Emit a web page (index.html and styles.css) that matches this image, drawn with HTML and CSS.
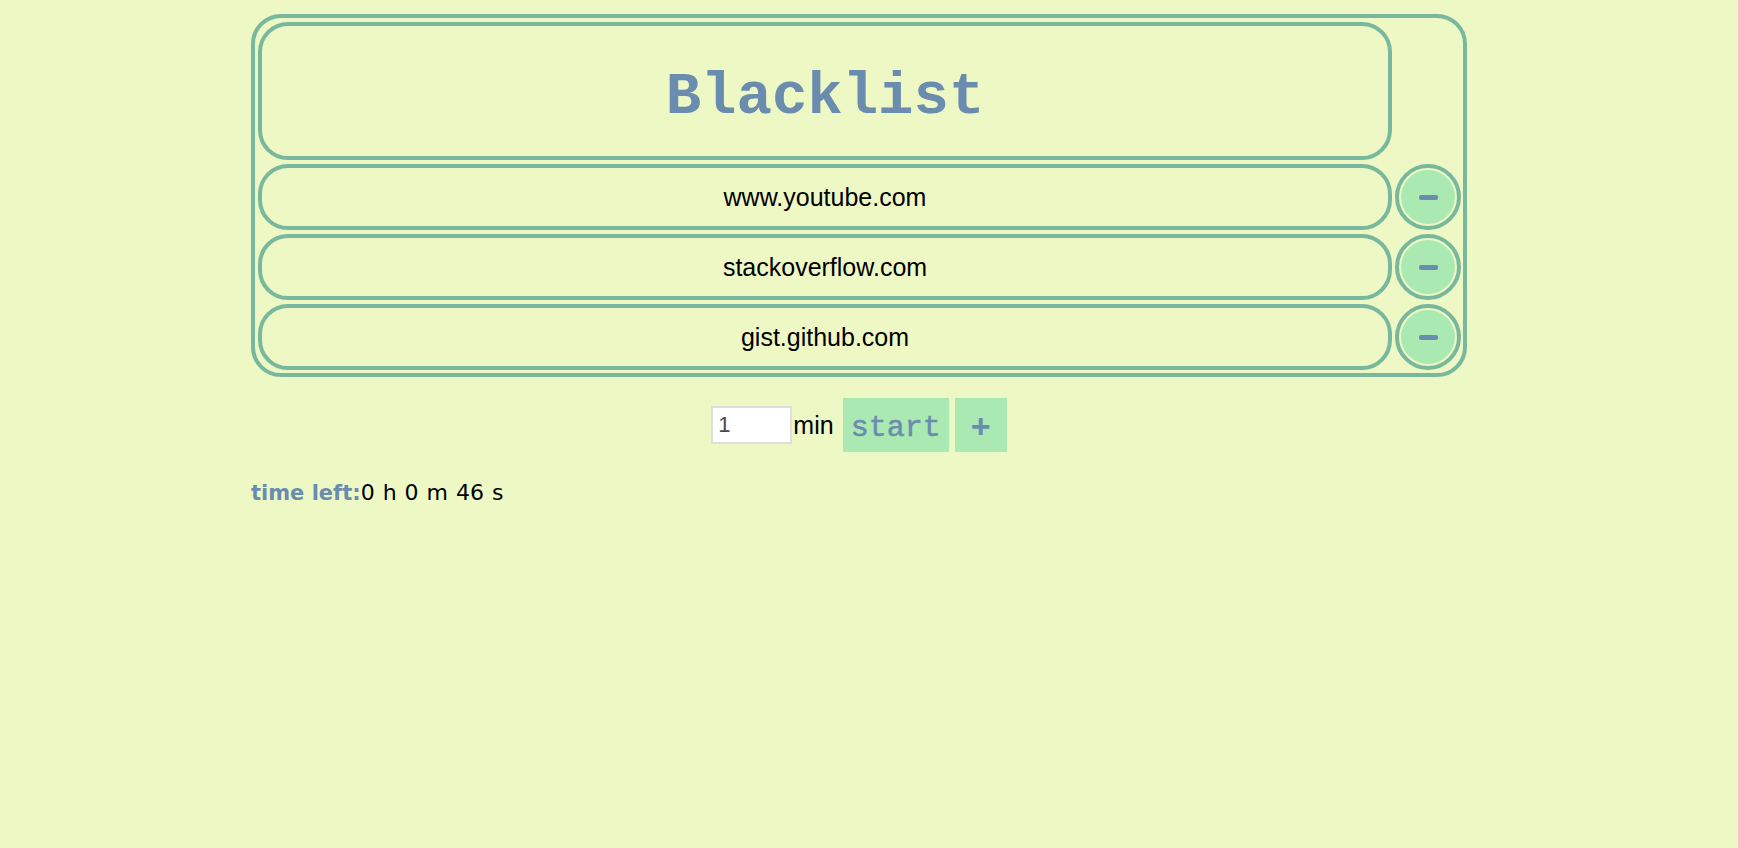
FILE: index.html
```html
<!DOCTYPE html>
<html lang="en">
<head>
<meta charset="utf-8">
<title>Blacklist</title>
<link rel="stylesheet" href="styles.css">
</head>
<body>
  <div class="panel">
    <div class="title-cell"><h1 class="title">Blacklist</h1></div>
    <div class="spacer"></div>

    <div class="site">www.youtube.com</div>
    <div class="remove"><button class="remove-btn" type="button" aria-label="remove"><span class="minus"></span></button></div>

    <div class="site">stackoverflow.com</div>
    <div class="remove"><button class="remove-btn" type="button" aria-label="remove"><span class="minus"></span></button></div>

    <div class="site">gist.github.com</div>
    <div class="remove"><button class="remove-btn" type="button" aria-label="remove"><span class="minus"></span></button></div>
  </div>

  <div class="controls">
    <input class="minutes" type="text" value="1">
    <span class="unit">min</span>
    <button class="start" type="button">start</button>
    <button class="add" type="button">+</button>
  </div>

  <div class="timer"><span class="timer-label">time left:</span><span class="timer-value">0 h 0 m 46 s</span></div>
</body>
</html>
```

FILE: styles.css
```css
html, body {
  margin: 0;
  background: #eef8c5;
}

body {
  padding: 14px 271px 0 251px;
  font-family: "Liberation Sans", Arial, sans-serif;
  color: #000;
}

.panel {
  display: grid;
  grid-template-columns: 1134px 66px;
  column-gap: 3px;
  row-gap: 4px;
  padding: 4px 2px 3px 3px;
  border: 4px solid #78b89c;
  border-radius: 30px;
}

.title-cell {
  height: 138px;
  box-sizing: border-box;
  border: 4px solid #78b89c;
  border-radius: 30px;
  display: flex;
  align-items: center;
  justify-content: center;
}

.title {
  margin: 12px 0 0 0;
  font-family: "Liberation Mono", "Courier New", monospace;
  font-weight: bold;
  font-size: 59px;
  line-height: 1;
  color: #6a8caf;
}

.site {
  height: 66px;
  box-sizing: border-box;
  border: 4px solid #78b89c;
  border-radius: 30px;
  display: flex;
  align-items: center;
  justify-content: center;
  font-size: 25px;
}

.remove {
  width: 66px;
  height: 66px;
  box-sizing: border-box;
  border: 4px solid #78b89c;
  border-radius: 50%;
  padding: 2px;
}

.remove-btn {
  width: 100%;
  height: 100%;
  margin: 0;
  padding: 0;
  border: none;
  border-radius: 50%;
  background: #abe9b2;
  display: flex;
  align-items: center;
  justify-content: center;
}

.minus {
  display: block;
  width: 19px;
  height: 5px;
  border-radius: 2px;
  background: #6a8caf;
  margin-left: 1px;
}

.controls {
  margin-top: 21px;
  display: flex;
  justify-content: center;
  align-items: center;
}

.minutes {
  width: 81px;
  height: 38px;
  box-sizing: border-box;
  margin: 0;
  padding: 0 0 0 5px;
  border: 2px solid #dedede;
  background: #fff;
  font-family: "Liberation Sans", Arial, sans-serif;
  font-size: 22px;
  color: #4a4a4a;
  outline: none;
}

.unit {
  margin-left: 1px;
  font-size: 25px;
}

.start {
  margin: 0 0 0 9px;
  width: 106px;
  height: 54px;
  padding: 6px 0 0 0;
  border: none;
  background: #abe9b2;
  font-family: "Liberation Mono", "Courier New", monospace;
  font-size: 30px;
  color: #6a8caf;
  -webkit-text-stroke: 0.5px #6a8caf;
}

.add {
  margin: 0 0 0 6px;
  width: 52px;
  height: 54px;
  padding: 2px 0 0 0;
  border: none;
  background: #abe9b2;
  font-family: "Liberation Sans", Arial, sans-serif;
  font-weight: bold;
  font-size: 34px;
  line-height: 1;
  color: #6a8caf;
}

.timer {
  margin-top: 29px;
  font-family: "DejaVu Sans", sans-serif;
  font-size: 21px;
  line-height: 24px;
}

.timer-label {
  font-weight: bold;
  color: #6a8caf;
}

.timer-value {
  font-size: 22px;
  word-spacing: 1px;
}
```
